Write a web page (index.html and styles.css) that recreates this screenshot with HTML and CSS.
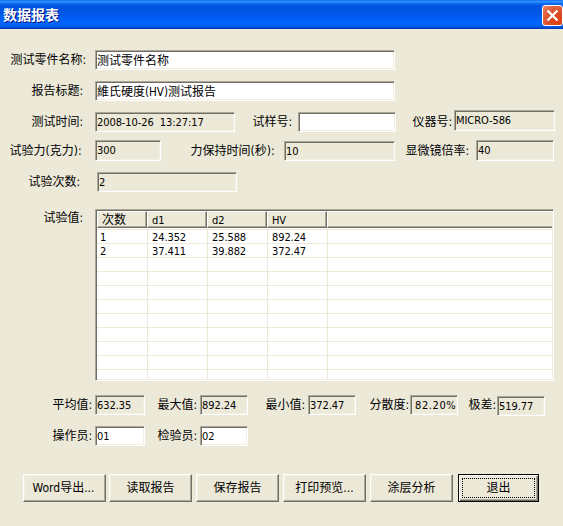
FILE: index.html
```html
<!DOCTYPE html>
<html lang="zh-CN">
<head>
<meta charset="utf-8">
<title>数据报表</title>
<link rel="stylesheet" href="styles.css">
</head>
<body>
<div class="dialog">
  <header class="titlebar">
    <h1 class="title">数据报表</h1>
    <button class="close" aria-label="关闭">
      <svg width="21" height="21" viewBox="0 0 21 21"><path d="M5.5 5.5L15.5 15.5M15.5 5.5L5.5 15.5" stroke="#fff" stroke-width="2.4" fill="none"/></svg>
    </button>
  </header>
  <main class="form">
    <div class="row row-name"><label>测试零件名称:</label><div class="field editable cn">测试零件名称</div></div>
    <div class="row row-title"><label>报告标题:</label><div class="field editable cn">維氏硬度<span class="lat">(HV)</span>测试报告</div></div>
    <div class="row row-time">
      <label>测试时间:</label><div class="field">2008-10-26&nbsp; 13:27:17</div>
      <label>试样号:</label><div class="field editable"></div>
      <label>仪器号:</label><div class="field tall raised">MICRO-586</div>
    </div>
    <div class="row row-force">
      <label>试验力(克力):</label><div class="field tall">300</div>
      <label>力保持时间(秒):</label><div class="field lowered">10</div>
      <label>显微镜倍率:</label><div class="field tall">40</div>
    </div>
    <div class="row row-count"><label>试验次数:</label><div class="field">2</div></div>
    <div class="row row-values">
      <label>试验值:</label>
      <div class="list">
        <div class="list-head"><span class="cn">次数</span><span>d1</span><span>d2</span><span>HV</span><span></span></div>
        <div class="list-body">
          <div class="line"><span>1</span><span>24.352</span><span>25.588</span><span>892.24</span><span></span></div>
          <div class="line"><span>2</span><span>37.411</span><span>39.882</span><span>372.47</span><span></span></div>
          <div class="line"><span></span><span></span><span></span><span></span><span></span></div>
          <div class="line"><span></span><span></span><span></span><span></span><span></span></div>
          <div class="line"><span></span><span></span><span></span><span></span><span></span></div>
          <div class="line"><span></span><span></span><span></span><span></span><span></span></div>
          <div class="line"><span></span><span></span><span></span><span></span><span></span></div>
          <div class="line"><span></span><span></span><span></span><span></span><span></span></div>
          <div class="line"><span></span><span></span><span></span><span></span><span></span></div>
          <div class="line"><span></span><span></span><span></span><span></span><span></span></div>
          <div class="line last"><span></span><span></span><span></span><span></span><span></span></div>
        </div>
      </div>
    </div>
    <div class="row row-stats">
      <label>平均值:</label><div class="field">632.35</div>
      <label>最大值:</label><div class="field">892.24</div>
      <label>最小值:</label><div class="field">372.47</div>
      <label>分散度:</label><div class="field percent">82.20%</div>
      <label>极差:</label><div class="field lowered">519.77</div>
    </div>
    <div class="row row-people">
      <label>操作员:</label><div class="field editable">01</div>
      <label>检验员:</label><div class="field editable">02</div>
    </div>
    <div class="buttons">
      <button class="btn word">Word导出...</button>
      <button class="btn">读取报告</button>
      <button class="btn">保存报告</button>
      <button class="btn">打印预览...</button>
      <button class="btn">涂层分析</button>
      <button class="btn default"><span>退出</span></button>
    </div>
  </main>
</div>
</body>
</html>
```
FILE: styles.css
```css
* { box-sizing: border-box; }
body {
  margin: 0;
  background: #ece9d8;
  color: #000;
  font: 12px/16px "DejaVu Sans Condensed", "Noto Sans CJK SC", sans-serif;
}
.dialog { width: 563px; height: 526px; overflow: hidden; background: #ece9d8; }

.titlebar {
  display: flex;
  align-items: center;
  justify-content: space-between;
  height: 29px;
  padding: 2px 0 0 3px;
  background: linear-gradient(#0058e6 0, #3a93ff 1px, #288eff 2px, #0a64ee 4px, #0054e0 6px, #0055e3 12px, #005ef5 18px, #0068ff 24px, #0060f0 26px, #0044c8 28px, #003dba 29px);
}
.title {
  margin: 0;
  padding-bottom: 3px;
  color: #fff;
  font: bold 14px/20px "Noto Sans CJK SC", sans-serif;
  text-shadow: 1px 1px 0 #0a1883;
}
.close {
  width: 21px;
  height: 21px;
  padding: 0;
  border: 1px solid #fff;
  border-radius: 3px;
  background: radial-gradient(circle at 80% 85%, #e04010 0, #da4c26 45%, #e7825f 100%);
}
.close svg { display: block; margin: -1px; }

.form { display: flex; flex-direction: column; }
.row { display: grid; align-items: start; height: 21px; }
.row label { padding-top: 2px; white-space: nowrap; text-indent: 0.6px; }
.row-name { margin-top: 21px; padding-left: 10px; grid-template-columns: 85px 300px; }
.row-title { margin-top: 10px; padding-left: 31px; grid-template-columns: 64px 300px; }
.row-time { margin-top: 10px; padding-left: 31px; grid-template-columns: 64px 140px 63px 98px 58px 101px; }
.row-time label:not(:first-child) { padding-left: 17px; }
.row-time label:nth-of-type(3) { padding-left: 16px; }
.row-force { margin-top: 7px; padding-left: 9px; grid-template-columns: 86px 66px 123px 111px 81px 78px; }
.row-force label { padding-top: 3px; }
.row-force label:nth-of-type(2) { padding-left: 29px; }
.row-force label:nth-of-type(3) { padding-left: 10px; }
.row-count { margin-top: 11px; padding-left: 28px; grid-template-columns: 69px 140px; }
.row-values { height: 172px; margin-top: 16px; padding-left: 43px; grid-template-columns: 52px 459px; }
.row-values label { padding-top: 1px; }
.row-stats { margin-top: 14px; padding-left: 52px; grid-template-columns: 43px 50px 55px 48px 60px 48px 54px 48px 39px 48px; }
.row-stats label:not(:first-child) { padding-left: 12px; }
.row-stats label:nth-of-type(3) { padding-left: 17px; }
.row-stats label:nth-of-type(4) { padding-left: 13px; }
.row-stats label:nth-of-type(5) { padding-left: 10px; }
.row-people { margin-top: 10px; padding-left: 52px; grid-template-columns: 43px 50px 55px 48px; }
.row-people label:not(:first-child) { padding-left: 12px; }

.field {
  height: 20px;
  padding-left: 1px;
  border: 1px solid;
  border-color: #aca899 #fff #fff #aca899;
  box-shadow: inset 1px 1px 0 #716f64, inset -1px -1px 0 #f1efe2;
  font-size: 11px;
  line-height: 20px;
  letter-spacing: -0.08px;
  white-space: nowrap;
}
.field.editable { background: #fff; }
.field.cn { font-size: 12px; letter-spacing: 0; line-height: 20px; }
.field .lat { font-size: 11.5px; }
.tall { height: 21px; }
.raised { margin-top: -2px; }
.lowered { margin-top: 1px; }
.field.percent { padding-left: 4px; letter-spacing: 0.6px; }

.list {
  height: 172px;
  padding: 1px;
  border: 1px solid;
  border-color: #aca899 #fff #fff #aca899;
  box-shadow: inset 1px 1px 0 #716f64, inset -1px -1px 0 #f1efe2;
  background: #fff;
  font-size: 11px;
  letter-spacing: -0.1px;
}
.list-head { display: grid; grid-template-columns: 50px 60px 60px 60px 1fr; }
.list-head span {
  height: 17px;
  padding-left: 4px;
  border: 1px solid;
  border-color: #fff #716f64 #716f64 #fff;
  box-shadow: inset -1px -1px 0 #aca899;
  background: #ece9d8;
  line-height: 17px;
}
.list-head .cn { font-size: 12px; letter-spacing: 0; line-height: 17px; }
.list-head span:last-child { border-right: 0; box-shadow: inset 0 -1px 0 #aca899; }
.list-body { padding-top: 1px; }
.line {
  display: grid;
  grid-template-columns: 51px 60px 60px 60px 1fr;
  height: 14px;
  border-top: 1px solid #ece9d8;
  line-height: 15px;
}
.line.last { height: 10px; }
.line span { padding-left: 4px; border-right: 1px solid #ece9d8; }
.line span:first-child { padding-left: 3px; }
.line span:last-child { border-right: 0; }

.buttons { display: flex; gap: 4px; margin: 27px 0 0 23px; }
.btn {
  width: 83px;
  height: 28px;
  padding: 0;
  border: 1px solid;
  border-color: #fff #716f64 #716f64 #fff;
  box-shadow: inset -1px -1px 0 #aca899, inset 1px 1px 0 #f1efe2;
  background: #ece9d8;
  color: #000;
  font: inherit;
}
.btn.word { margin-right: -1px; padding-right: 2px; }
.btn.default {
  width: 81px;
  margin-left: 1px;
  padding: 3px;
  border-color: #000;
  box-shadow: inset 1px 1px 0 #fff, inset -1px -1px 0 #716f64, inset -2px -2px 0 #aca899;
}
.btn.default span { display: block; height: 20px; border: 1px dotted #000; line-height: 18px; }
```
